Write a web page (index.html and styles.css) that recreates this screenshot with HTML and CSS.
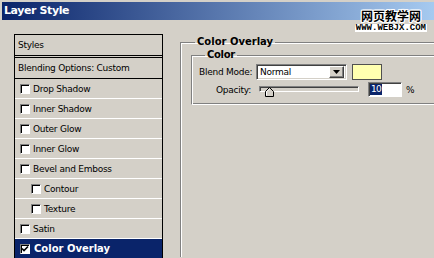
FILE: index.html
```html
<!DOCTYPE html>
<html lang="en">
  <head>
    <meta charset="UTF-8" />
    <title>Layer Style</title>
    <link rel="stylesheet" href="styles.css">
  </head>
  <body>
    <div class="window">
      <div class="titlebar">Layer Style</div>

      <div class="watermark">
        <div class="wm-cn">网页教学网</div>
        <div class="wm-url">WWW.WEBJX.COM</div>
      </div>

      <div class="dialog">
        <ul class="style-list">
          <li class="row head">Styles</li>
          <li class="row blend">Blending Options: Custom</li>
          <li class="row"><span class="check"></span>Drop Shadow</li>
          <li class="row"><span class="check"></span>Inner Shadow</li>
          <li class="row"><span class="check"></span>Outer Glow</li>
          <li class="row"><span class="check"></span>Inner Glow</li>
          <li class="row"><span class="check"></span>Bevel and Emboss</li>
          <li class="row sub"><span class="check"></span>Contour</li>
          <li class="row sub"><span class="check"></span>Texture</li>
          <li class="row"><span class="check"></span>Satin</li>
          <li class="row selected">
            <span class="check">
              <svg width="8" height="8" viewBox="0 0 8 8"><polyline points="1,3.5 3,5.5 7,1.5" fill="none" stroke="#000" stroke-width="1.6" /></svg>
            </span>Color Overlay
          </li>
        </ul>

        <div class="settings">
          <fieldset class="group outer">
            <legend>Color Overlay</legend>
            <fieldset class="group inner">
              <legend>Color</legend>

              <div class="field">
                <label>Blend Mode:</label>
                <div class="select">
                  <span>Normal</span>
                  <span class="arrow">
                    <svg width="7" height="4" viewBox="0 0 7 4"><polygon points="0,0 7,0 3.5,4" fill="#000" /></svg>
                  </span>
                </div>
                <div class="swatch"></div>
              </div>

              <div class="field opacity">
                <label>Opacity:</label>
                <div class="slider">
                  <div class="track"></div>
                  <svg class="thumb" width="9" height="10" viewBox="0 0 9 10">
                    <polygon points="4.5,0.5 8.5,4.5 8.5,9.5 0.5,9.5 0.5,4.5" fill="#d4d0c8" stroke="#000" />
                    <polyline points="1.5,8.5 1.5,4.9 4.5,1.9" fill="none" stroke="#fff" />
                  </svg>
                </div>
                <div class="textbox"><span class="sel">10</span></div>
                <span class="unit">%</span>
              </div>
            </fieldset>
          </fieldset>
        </div>
      </div>
    </div>
  </body>
</html>
```

FILE: styles.css
```css
body {
  margin: 0;
  width: 434px;
  height: 258px;
  overflow: hidden;
  background-color: #d4d0c8;
  font-family: "DejaVu Sans", sans-serif;
  font-size: 9px;
  letter-spacing: -0.25px;
  color: #000;
}

.window {
  position: relative;
  height: 256px;
  padding-top: 2px;
  overflow: hidden;
}

/* Title bar with the classic blue gradient */
.titlebar {
  height: 18px;
  margin-left: 2px;
  padding-left: 2px;
  line-height: 18px;
  background: linear-gradient(to right, #0a246a, #a6caf0);
  color: #fff;
  font-weight: bold;
  font-size: 11px;
  letter-spacing: -0.4px;
}

.watermark {
  position: absolute;
  top: 9px;
  right: 7px;
  text-align: center;
}

.wm-cn {
  font-family: "Noto Sans CJK SC", sans-serif;
  font-weight: bold;
  font-size: 12px;
  line-height: 14px;
  letter-spacing: 0;
  color: #000;
  text-shadow: 1px 0 #fff, -1px 0 #fff, 0 1px #fff, 0 -1px #fff,
    1px 1px #fff, -1px -1px #fff, 1px -1px #fff, -1px 1px #fff;
}

.wm-url {
  margin-top: 1px;
  padding: 0 1px;
  background-color: #fff;
  font-family: "Liberation Mono", monospace;
  font-weight: bold;
  font-size: 9px;
  line-height: 8px;
  letter-spacing: 0;
}

.dialog {
  display: flex;
  align-items: flex-start;
  padding: 14px 0 0 14px;
}

/* Left list of layer styles, cut off by the bottom of the shot */
.style-list {
  flex-shrink: 0;
  width: 149px;
  margin: 0;
  padding: 0;
  list-style: none;
  border: 1px solid #000;
  border-bottom: none;
  box-sizing: border-box;
}

.row {
  display: flex;
  align-items: center;
  height: 19px;
  padding-left: 5px;
  border-bottom: 1px solid #fff;
  white-space: nowrap;
}

.row.head {
  height: 20px;
  padding-left: 3px;
  border-bottom: 3px double #000;
}

.row.blend {
  height: 20px;
  padding-left: 3px;
  border-bottom: 1px solid #000;
}

.row.sub {
  padding-left: 16px;
}

.row.selected {
  background-color: #0a246a;
  color: #fff;
  font-weight: bold;
  font-size: 10px;
  letter-spacing: 0;
  border-bottom: none;
}

.check {
  display: block;
  flex-shrink: 0;
  width: 10px;
  height: 10px;
  margin-right: 3px;
  box-sizing: border-box;
  border: 1px solid;
  border-color: #808080 #fff #fff #808080;
  box-shadow: inset 1px 1px 0 #000;
  background-color: #fff;
}

.check svg {
  display: block;
}

.row.selected .check {
  margin-right: 4px;
}

/* Right side settings */
.settings {
  flex-shrink: 0;
  width: 254px;
  margin-left: 17px;
}

.group {
  margin: 0;
  min-width: 0;
  border: 1px solid;
  border-right: none;
  border-color: #808080 #fff #fff #808080;
  box-shadow: inset 1px 1px 0 #fff, inset 0 -1px 0 #808080;
}

.group legend {
  padding: 0 2px;
  font-weight: bold;
  font-size: 10px;
  line-height: 12px;
  letter-spacing: 0;
}

.group.outer {
  margin-top: 2px;
  padding: 0 0 152px 10px;
  border-bottom: none;
  box-shadow: inset 1px 1px 0 #fff;
}

.group.outer > legend {
  margin-left: 4px;
}

.group.inner {
  margin-top: 1px;
  padding: 3px 0 7px 7px;
}

.group.inner > legend {
  margin-left: 6px;
  letter-spacing: -0.3px;
}

.field {
  display: flex;
  align-items: center;
  height: 16px;
}

.field.opacity {
  height: 15px;
  margin-top: 2px;
}

.field label {
  flex-shrink: 0;
  width: 52px;
  text-align: right;
  white-space: nowrap;
}

.select {
  display: flex;
  align-items: center;
  width: 91px;
  height: 16px;
  margin-left: 5px;
  padding: 2px;
  box-sizing: border-box;
  border: 1px solid;
  border-color: #808080 #fff #fff #808080;
  box-shadow: inset 1px 1px 0 #404040, inset -1px -1px 0 #d4d0c8;
  background-color: #fff;
}

.select span:first-child {
  margin-left: 1px;
}

.arrow {
  display: flex;
  align-items: center;
  justify-content: center;
  width: 15px;
  height: 12px;
  margin-left: auto;
  box-sizing: border-box;
  border: 1px solid;
  border-color: #fff #404040 #404040 #fff;
  box-shadow: inset -1px -1px 0 #808080;
  background-color: #d4d0c8;
}

.arrow svg {
  display: block;
}

.swatch {
  width: 30px;
  height: 16px;
  margin-left: 5px;
  box-sizing: border-box;
  border: 1px solid #505050;
  background-color: #ffffb0;
}

.slider {
  position: relative;
  width: 100px;
  height: 15px;
  margin-left: 8px;
}

.track {
  height: 6px;
  margin-top: 4px;
  box-sizing: border-box;
  border: 1px solid;
  border-color: #808080 #fff #fff #808080;
  box-shadow: inset 1px 1px 0 #404040;
  background-color: #d4d0c8;
}

.thumb {
  position: absolute;
  left: 6px;
  top: 5px;
}

.textbox {
  display: flex;
  align-items: center;
  width: 34px;
  height: 15px;
  margin-left: 9px;
  padding-left: 1px;
  box-sizing: border-box;
  border: 1px solid;
  border-color: #808080 #fff #fff #808080;
  box-shadow: inset 1px 1px 0 #404040;
  background-color: #fff;
}

.sel {
  padding: 0 1px;
  line-height: 11px;
  background-color: #0a246a;
  color: #fff;
  letter-spacing: -0.8px;
}

.unit {
  margin-left: 4px;
}
```
